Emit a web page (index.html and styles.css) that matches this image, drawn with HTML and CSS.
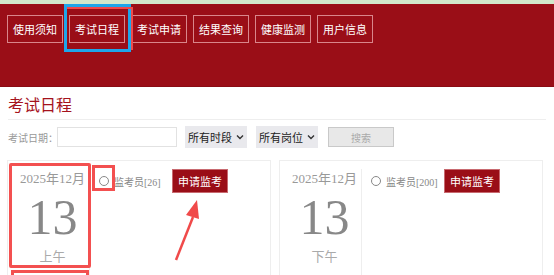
FILE: index.html
```html
<!DOCTYPE html>
<html lang="zh-CN">
<head>
    <meta charset="UTF-8">
    <meta name="viewport" content="width=device-width, initial-scale=1.0">
    <title>考试日程</title>
    <link rel="stylesheet" href="styles.css">
</head>
<body>
    <div class="topbar"></div>
    <header class="header">
        <nav class="nav">
            <a class="nav-btn">使用须知</a>
            <a class="nav-btn">考试日程</a>
            <a class="nav-btn">考试申请</a>
            <a class="nav-btn">结果查询</a>
            <a class="nav-btn">健康监测</a>
            <a class="nav-btn">用户信息</a>
        </nav>
    </header>

    <main class="main">
        <h2 class="page-title">考试日程</h2>
        <div class="filter">
            <span class="filter-label">考试日期：</span>
            <input class="date-input" type="text">
            <div class="select">所有时段
                <svg width="8" height="6" viewBox="0 0 8 6"><path d="M1 1.5 L4 4.5 L7 1.5" fill="none" stroke="#333" stroke-width="1.4"/></svg>
            </div>
            <div class="select">所有岗位
                <svg width="8" height="6" viewBox="0 0 8 6"><path d="M1 1.5 L4 4.5 L7 1.5" fill="none" stroke="#333" stroke-width="1.4"/></svg>
            </div>
            <button class="search-btn">搜索</button>
        </div>

        <div class="cards">
            <div class="card">
                <div class="date-col">
                    <div class="ym">2025年12月</div>
                    <div class="day">13</div>
                    <div class="period">上午</div>
                </div>
                <div class="slot">
                    <span class="radio"></span>
                    <span class="slot-text">监考员[26]</span>
                </div>
                <button class="apply-btn">申请监考</button>
            </div>
            <div class="card">
                <div class="date-col">
                    <div class="ym">2025年12月</div>
                    <div class="day">13</div>
                    <div class="period">下午</div>
                </div>
                <div class="slot">
                    <span class="radio"></span>
                    <span class="slot-text">监考员[200]</span>
                </div>
                <button class="apply-btn">申请监考</button>
            </div>
        </div>
    </main>

    <!-- annotation marks drawn over the screenshot -->
    <div class="mark mark-blue"></div>
    <div class="mark mark-red mark-nav"></div>
    <div class="mark mark-red mark-date"></div>
    <div class="mark mark-red mark-date2"></div>
    <div class="mark mark-red mark-radio"></div>
    <svg class="arrow" width="40" height="64" viewBox="0 0 40 64">
        <path d="M4 62 L21 19" stroke="#f04a4a" stroke-width="2.5" fill="none"/>
        <path d="M25 2 L14 17 L27 21 Z" fill="#f04a4a"/>
    </svg>
</body>
</html>
```

FILE: styles.css
```css
body {
    margin: 0;
    font-family: "Noto Sans CJK SC", "Noto Sans", sans-serif;
    background: #fff;
    overflow: hidden;
}
.topbar {
    height: 4px;
    background: #d3e7cb;
}
.header {
    height: 82px;
    background: #9a0e17;
    border-bottom: 1px solid #8a0c14;
}
.nav {
    display: flex;
    gap: 6px;
    padding: 11px 0 0 7px;
}
.nav-btn {
    display: block;
    height: 26px;
    line-height: 26px;
    padding: 0 5px;
    border: 1px solid #d9868b;
    color: #fff;
    font-size: 11px;
}

.main {
    padding: 0 8px;
}
.page-title {
    margin: 0;
    padding: 6px 0 4px;
    font-size: 16px;
    font-weight: normal;
    line-height: 22px;
    color: #a5131d;
    border-bottom: 1px solid #eee;
}
.filter {
    display: flex;
    align-items: center;
    height: 28px;
    padding-top: 3px;
}
.filter-label {
    width: 49px;
    font-size: 10px;
    color: #999;
    white-space: nowrap;
}
.date-input {
    box-sizing: border-box;
    width: 120px;
    height: 20px;
    border: 1px solid #e2e2e2;
    margin: 0 8px 0 0;
    padding: 0;
}
.select {
    display: flex;
    align-items: center;
    gap: 4px;
    height: 22px;
    padding: 0 3px;
    background: #e9e9ed;
    font-size: 11px;
    color: #222;
    margin-right: 9px;
}
.search-btn {
    box-sizing: border-box;
    width: 66px;
    height: 20px;
    margin-left: 1px;
    padding: 0;
    background: #e8e8e8;
    border: 1px solid #c9c9c9;
    color: #aaa;
    font-size: 10px;
    font-family: inherit;
}

.cards {
    display: flex;
    gap: 8px;
    margin: 9px 0 0 -1px;
}
.card {
    box-sizing: border-box;
    display: flex;
    width: 264px;
    height: 130px;
    border: 1px solid #eee;
    padding-top: 8px;
}
.date-col {
    width: 82px;
    border-right: 1px solid #eee;
    text-align: center;
    padding-left: 8px;
    box-sizing: border-box;
    color: #999;
}
.ym {
    font-family: "Liberation Serif", "Noto Sans CJK SC", serif;
    font-size: 13px;
    line-height: 14px;
    margin-top: 3px;
}
.day {
    font-family: "Liberation Serif", serif;
    font-size: 50px;
    line-height: 50px;
    color: #888;
    margin-top: 6px;
}
.period {
    font-size: 13px;
    line-height: 16px;
    margin-top: 6px;
    color: #aaa;
}
.slot {
    box-sizing: border-box;
    display: flex;
    align-items: center;
    gap: 5px;
    width: 82px;
    height: 18px;
    padding-left: 9px;
    margin-top: 3px;
}
.radio {
    box-sizing: border-box;
    width: 10px;
    height: 10px;
    border: 1.5px solid #888;
    border-radius: 50%;
}
.slot-text {
    font-family: "Liberation Serif", "Noto Sans CJK SC", serif;
    font-size: 10px;
    color: #888;
    white-space: nowrap;
}
.apply-btn {
    width: 56px;
    height: 24px;
    padding: 0;
    background: #9a0e17;
    border: 1px solid #c86a70;
    color: #fff;
    font-size: 11px;
    font-family: inherit;
}

.mark {
    position: absolute;
    box-sizing: border-box;
}
.mark-blue {
    left: 64px;
    top: 4px;
    width: 67px;
    height: 48px;
    border: 3px solid #1ea6ea;
}
.mark-nav {
    left: 67px;
    top: 7px;
    width: 66px;
    height: 43px;
    border: 2px solid #f04a4a;
    border-left: none;
    border-bottom: none;
}
.mark-date {
    left: 9px;
    top: 163px;
    width: 82px;
    height: 105px;
    border: 3px solid #f35050;
    border-radius: 2px;
}
.mark-date2 {
    left: 11px;
    top: 270px;
    width: 78px;
    height: 20px;
    border: 3px solid #f35050;
}
.mark-radio {
    left: 92px;
    top: 165px;
    width: 23px;
    height: 26px;
    border: 3px solid #f35050;
}
.arrow {
    position: absolute;
    left: 172px;
    top: 198px;
}
```
